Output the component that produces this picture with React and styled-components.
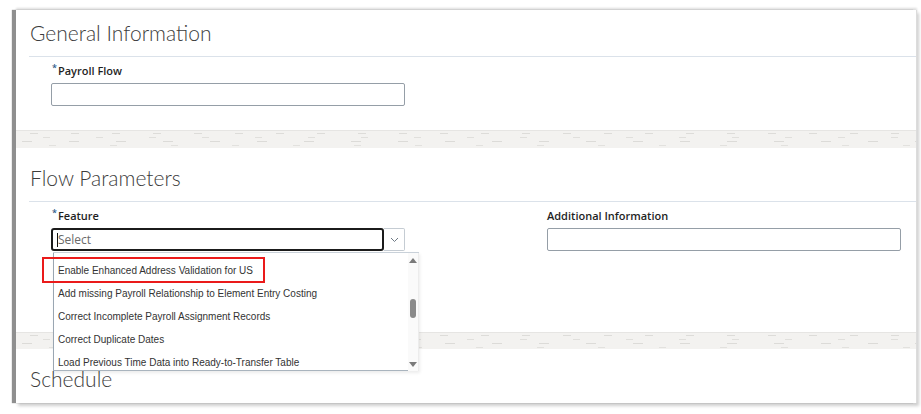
import React from "react";
import styled, { createGlobalStyle } from "styled-components";

const Global = createGlobalStyle`
  html, body { margin: 0; padding: 0; background: #ffffff; }
  body { font-family: "Open Sans", "Liberation Sans", sans-serif; }
  * { box-sizing: border-box; }
`;

const Page = styled.div`
  width: 921px;
  height: 414px;
  padding: 10px 4px 0 16px;
  background: #ffffff;
`;

const Panel = styled.div`
  position: relative;
  width: 901px;
  height: 393px;
  background: #ffffff;
  border-right: 1px solid #dcdcdc;
  box-shadow: -4px 0 1px #8f8f8f, 0 -2px 2px #dedede, 2px 3px 3px #cfcfcf;
`;

const Section = styled.section`
  padding-top: ${(p) => p.$top || 0}px;
`;

const SectionHeader = styled.h2`
  margin: 0 0 0 13px;
  height: 47px;
  display: flex;
  align-items: center;
  padding-left: 1px;
  padding-bottom: 1px;
  font-family: Lato, "Open Sans", sans-serif;
  font-weight: 300;
  font-size: 21px;
  color: #3c3c3c;
  border-bottom: ${(p) => (p.$plain ? "none" : "1px solid #dbe2ea")};
`;

const FieldGrid = styled.div`
  display: grid;
  grid-template-columns: 354px 354px;
  column-gap: 142px;
  padding: ${(p) => p.$top}px 0 ${(p) => p.$bottom}px 35px;
`;

const Field = styled.div`
  display: flex;
  flex-direction: column;
  gap: 4px;
`;

const Label = styled.label`
  height: 16px;
  line-height: 16px;
  font-family: "Open Sans", sans-serif;
  font-weight: 600;
  font-size: 11px;
  color: #1f1f1f;
  padding-left: ${(p) => (p.$required ? 1 : 0)}px;
`;

const Star = styled.span`
  display: inline-block;
  font-size: 9px;
  font-weight: 600;
  color: #2f5d8a;
  vertical-align: 4px;
  line-height: 1;
  margin-right: 1px;
`;

const TextInput = styled.div`
  height: 23px;
  border: 1px solid #959ea7;
  border-radius: 2px;
  background: #ffffff;
`;

const SelectWrap = styled.div`
  position: relative;
  height: 23px;
`;

const Combo = styled.div`
  display: flex;
  height: 23px;
`;

const SelectInput = styled.div`
  flex: 1;
  display: flex;
  align-items: center;
  padding-left: 4px;
  border: 2px solid #1b1b1b;
  border-radius: 3px;
  font-family: "Open Sans", sans-serif;
  font-size: 12px;
  color: #6a6a6a;
`;

const Caret = styled.span`
  display: inline-block;
  width: 1px;
  height: 14px;
  background: #111;
`;

const DropButton = styled.div`
  width: 21px;
  display: flex;
  align-items: center;
  justify-content: center;
  border: 1px solid #c5ccd3;
  border-left: none;
  border-radius: 0 2px 2px 0;
`;

const Dropdown = styled.div`
  position: absolute;
  top: 24px;
  left: 2px;
  width: 366px;
  height: 119px;
  display: flex;
  background: #ffffff;
  border-top: 1px solid #c9d1d9;
  box-shadow: 1px 2px 3px rgba(0, 0, 0, 0.08);
  z-index: 2;
`;

const ItemList = styled.ul`
  flex: 1;
  margin: 0;
  padding: 6px 0 0 0;
  list-style: none;
  border-left: 1px solid #9aa6b2;
  border-bottom: 1px solid #a9b4be;
  overflow: hidden;
`;

const Item = styled.li`
  height: 23px;
  line-height: 23px;
  padding-left: 4px;
  font-family: "Liberation Sans", Arial, sans-serif;
  font-size: 10px;
  color: #333333;
  white-space: nowrap;
`;

const ScrollTrack = styled.div`
  width: 11px;
  display: flex;
  flex-direction: column;
  align-items: center;
  padding: 5px 0 4px;
  background: #fafafa;
  border-right: 1px solid #ececec;
`;

const Thumb = styled.div`
  width: 6px;
  height: 19px;
  border-radius: 3px;
  background: #8a8a8a;
  margin-top: 36px;
  margin-bottom: auto;
`;

const Highlight = styled.div`
  position: absolute;
  left: -9px;
  top: 29px;
  width: 223px;
  height: 26px;
  border: 2px solid #ea1a1a;
  z-index: 3;
  pointer-events: none;
`;

const Band = styled.div`
  height: ${(p) => p.$h}px;
  border-top: 1px solid #e6e5e3;
  background-color: #f3f2f0;
  background-image:
    repeating-linear-gradient(90deg, transparent 0 14px, #dddcd9 14px 22px, transparent 22px 41px),
    repeating-linear-gradient(90deg, transparent 0 27px, #e0dfdc 27px 34px, transparent 34px 53px),
    repeating-linear-gradient(90deg, transparent 0 6px, #dcdbd8 6px 16px, transparent 16px 47px),
    repeating-linear-gradient(90deg, transparent 0 33px, #e2e1de 33px 40px, transparent 40px 61px);
  background-size: 100% 1px;
  background-repeat: no-repeat;
  background-position: 0 2px, 0 6px, 0 10px, 0 14px;
`;

const Chevron = () => (
  <svg width="9" height="6" viewBox="0 0 9 6">
    <polyline points="1,1 4.5,4.5 8,1" fill="none" stroke="#6f7a85" strokeWidth="1" />
  </svg>
);

const Arrow = ({ up }) => (
  <svg width="8" height="5" viewBox="0 0 8 5">
    <polygon points={up ? "0,5 4,0 8,5" : "0,0 8,0 4,5"} fill="#7a7a7a" />
  </svg>
);

const items = [
  "Enable Enhanced Address Validation for US",
  "Add missing Payroll Relationship to Element Entry Costing",
  "Correct Incomplete Payroll Assignment Records",
  "Correct Duplicate Dates",
  "Load Previous Time Data into Ready-to-Transfer Table",
];

export default function App() {
  return (
    <>
      <Global />
      <Page>
        <Panel>
          <Section>
            <SectionHeader>General Information</SectionHeader>
            <FieldGrid $top={6} $bottom={24}>
              <Field>
                <Label $required>
                  <Star>*</Star>Payroll Flow
                </Label>
                <TextInput />
              </Field>
            </FieldGrid>
          </Section>
          <Band $h={18} />
          <Section $top={7}>
            <SectionHeader>Flow Parameters</SectionHeader>
            <FieldGrid $top={6} $bottom={81}>
              <Field>
                <Label $required>
                  <Star>*</Star>Feature
                </Label>
                <SelectWrap>
                  <Combo>
                    <SelectInput>
                      <Caret />
                      Select
                    </SelectInput>
                    <DropButton>
                      <Chevron />
                    </DropButton>
                  </Combo>
                  <Dropdown>
                    <ItemList>
                      {items.map((t) => (
                        <Item key={t}>{t}</Item>
                      ))}
                    </ItemList>
                    <ScrollTrack>
                      <Arrow up />
                      <Thumb />
                      <Arrow />
                    </ScrollTrack>
                  </Dropdown>
                  <Highlight />
                </SelectWrap>
              </Field>
              <Field>
                <Label>Additional Information</Label>
                <TextInput />
              </Field>
            </FieldGrid>
          </Section>
          <Band $h={17} />
          <Section $top={6}>
            <SectionHeader $plain>Schedule</SectionHeader>
          </Section>
        </Panel>
      </Page>
    </>
  );
}
